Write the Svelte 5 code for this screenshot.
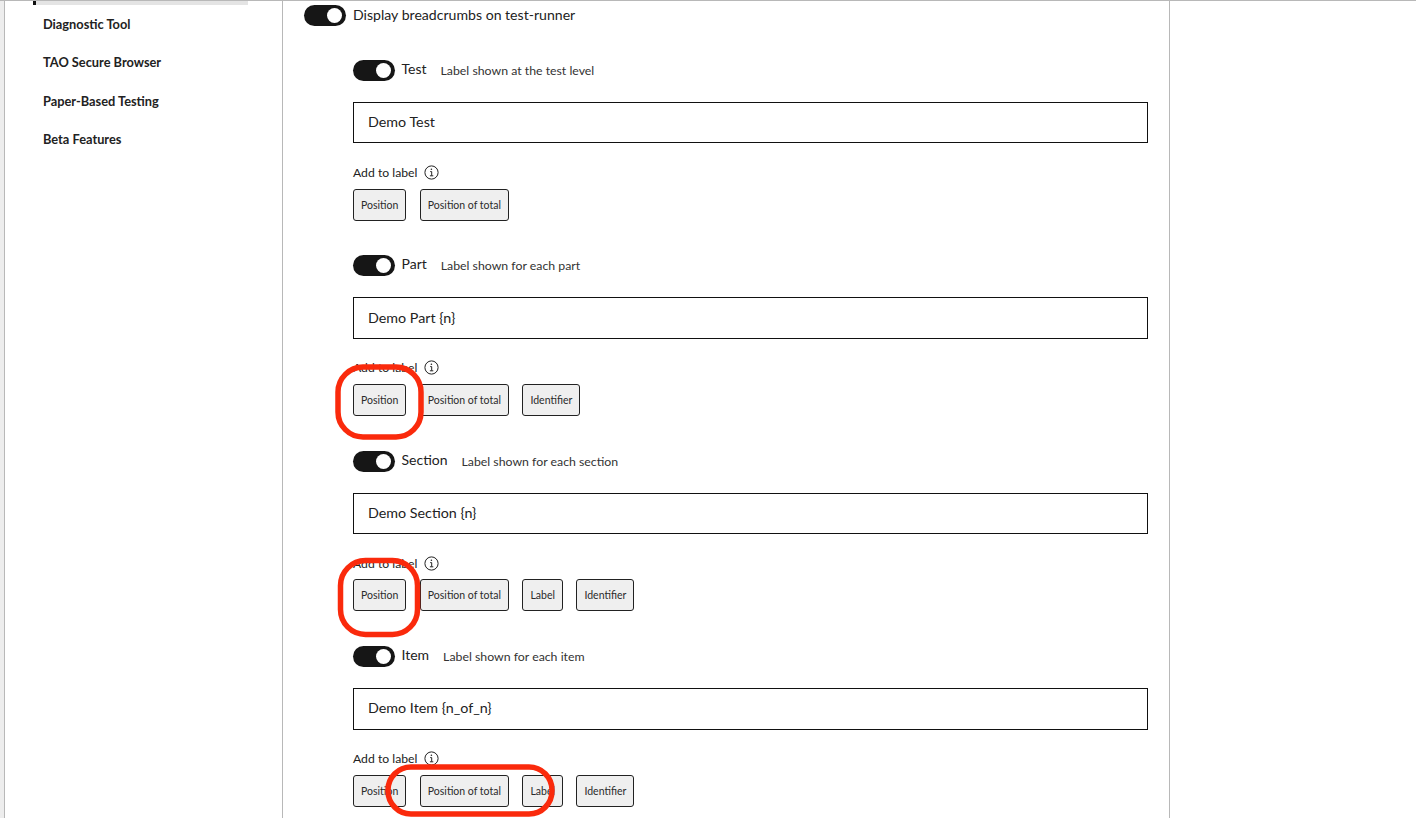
<script>
  const sideItems = ['Diagnostic Tool', 'TAO Secure Browser', 'Paper-Based Testing', 'Beta Features'];

  const levels = [
    { name: 'Test', hint: 'Label shown at the test level', value: 'Demo Test', tags: ['Position', 'Position of total'] },
    { name: 'Part', hint: 'Label shown for each part', value: 'Demo Part {n}', tags: ['Position', 'Position of total', 'Identifier'] },
    { name: 'Section', hint: 'Label shown for each section', value: 'Demo Section {n}', tags: ['Position', 'Position of total', 'Label', 'Identifier'] },
    { name: 'Item', hint: 'Label shown for each item', value: 'Demo Item {n_of_n}', tags: ['Position', 'Position of total', 'Label', 'Identifier'] }
  ];
</script>

<div class="page">
  <aside class="sidebar">
    <div class="active-item"></div>
    <ul>
      {#each sideItems as item}
        <li>{item}</li>
      {/each}
    </ul>
  </aside>

  <main class="content">
    <div class="master">
      <span class="toggle"></span>
      <span class="master-label">Display breadcrumbs on test-runner</span>
    </div>

    {#each levels as level}
      <section class="level">
        <div class="level-head">
          <span class="toggle"></span>
          <span class="level-name">{level.name}</span>
          <span class="level-hint">{level.hint}</span>
        </div>
        <input class="label-input" type="text" value={level.value} />
        <div class="add-label">
          Add to label
          <svg width="15" height="15" viewBox="0 0 15 15" fill="none" stroke="#222">
            <circle cx="7.5" cy="7.5" r="6.6" stroke-width="1" />
            <path d="M6.2 6.6h1.5v4M5.9 10.8h3.4" stroke-width="1" />
            <circle cx="7.4" cy="4.2" r="0.8" fill="#222" stroke="none" />
          </svg>
        </div>
        <div class="tags">
          {#each level.tags as tag}
            <button class="tag" type="button">{tag}</button>
          {/each}
        </div>
      </section>
    {/each}
  </main>

  <aside class="right"></aside>

  <!-- review annotations drawn on top of the screenshot -->
  <svg class="marks" width="1416" height="818" viewBox="0 0 1416 818" fill="none" stroke="#fa2a0c" stroke-width="5.5">
    <rect x="338" y="367" width="83" height="70" rx="25" />
    <rect x="340.5" y="560.5" width="77" height="74" rx="25" />
    <rect x="388" y="767" width="164" height="47" rx="23" />
  </svg>
</div>

<style>
  :global(body) {
    margin: 0;
    background: #fff;
    overflow: hidden;
  }

  .page {
    position: relative;
    display: flex;
    height: 818px;
    overflow: hidden;
    box-sizing: border-box;
    border-top: 1px solid #b8b8b8;
    font-family: Lato, "Noto Sans", sans-serif;
    color: #222;
    background: #fff;
  }

  .sidebar {
    box-sizing: border-box;
    width: 279px;
    flex: none;
    margin-left: 4px;
    border-left: 1px solid #b8b8b8;
    border-right: 1px solid #b8b8b8;
    box-shadow: -4px 0 0 #ededed;
  }

  .active-item {
    box-sizing: border-box;
    width: 215px;
    height: 4px;
    margin-left: 28px;
    background: #e4e4e4;
    border-left: 3px solid #111;
  }

  ul {
    list-style: none;
    margin: 10px 0 0;
    padding: 0 0 0 38px;
  }

  li {
    height: 38.4px;
    line-height: 18px;
    font-size: 12.8px;
    font-weight: 700;
    color: #222;
  }

  .content {
    box-sizing: border-box;
    width: 887px;
    flex: none;
    padding: 4px 21px 0;
    border-right: 1px solid #b8b8b8;
  }

  .master {
    display: flex;
    align-items: center;
    gap: 7px;
    height: 21px;
  }

  .master-label {
    position: relative;
    top: -1px;
    font-size: 14.1px;
  }

  .toggle {
    position: relative;
    flex: none;
    width: 42px;
    height: 21px;
    border-radius: 11px;
    background: #161616;
  }

  .toggle::after {
    content: '';
    position: absolute;
    top: 3px;
    right: 4px;
    width: 15px;
    height: 15px;
    border-radius: 50%;
    background: #fff;
  }

  .level {
    margin-left: 49px;
    height: 195.4px;
  }

  .level:first-of-type {
    margin-top: 34px;
  }

  .level-head {
    display: flex;
    align-items: center;
    height: 21px;
  }

  .level-name {
    margin-left: 6.5px;
    font-size: 14px;
    position: relative;
    top: -2px;
  }

  .level-hint {
    margin-left: 14px;
    font-size: 12.3px;
    color: #333;
  }

  .label-input {
    display: block;
    box-sizing: border-box;
    width: 795px;
    height: 41.4px;
    margin-top: 21px;
    padding: 0 14px 2px;
    border: 1px solid #111;
    border-radius: 0;
    outline: none;
    background: #fff;
    font: 14.3px Lato, "Noto Sans", sans-serif;
    color: #222;
  }

  .add-label {
    display: flex;
    align-items: center;
    gap: 7px;
    height: 16px;
    margin-top: 21.2px;
    font-size: 12.2px;
  }

  .tags {
    display: flex;
    gap: 13.5px;
    margin-top: 8px;
  }

  .tag {
    box-sizing: border-box;
    height: 32px;
    padding: 0 7px;
    border: 1px solid #222;
    border-radius: 3px;
    background: #efefef;
    font: 10.5px Lato, "Noto Sans", sans-serif;
    color: #2b2b2b;
  }

  .right {
    flex: 1;
  }

  .marks {
    position: absolute;
    top: -1px;
    left: 0;
    pointer-events: none;
  }
</style>
